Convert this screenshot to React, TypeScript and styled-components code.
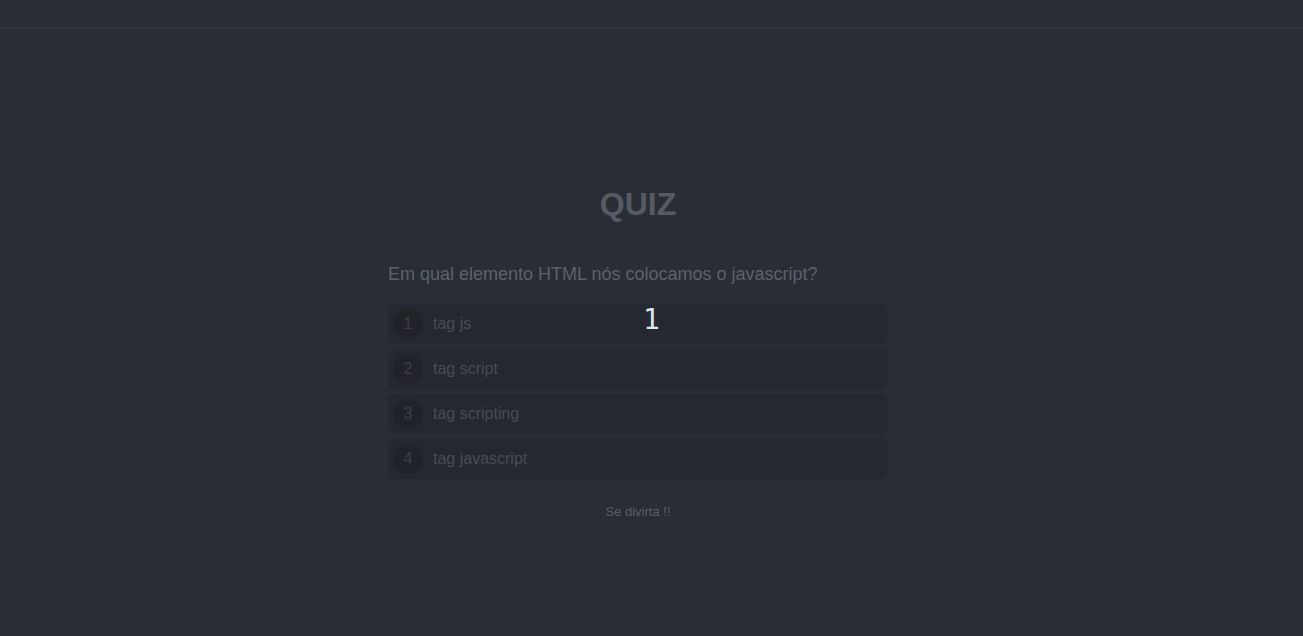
import React from 'react';
import styled, { createGlobalStyle } from 'styled-components';

const GlobalStyle = createGlobalStyle`
  html, body {
    margin: 0;
    padding: 0;
    background: #2a2d35;
    font-family: "Liberation Sans", Arial, sans-serif;
  }
`;

const Page = styled.div`
  min-height: 636px;
  background: #2a2d35;
  display: flex;
  flex-direction: column;
`;

const TopBar = styled.header`
  height: 28px;
  border-bottom: 1px solid #353840;
`;

const Main = styled.main`
  display: flex;
  flex-direction: column;
  align-items: center;
  padding-top: 155px;
  padding-right: 27px;
`;

const Title = styled.h1`
  margin: 0;
  color: #565a63;
  font-size: 32px;
  font-weight: 700;
  line-height: 40px;
`;

const Quiz = styled.section`
  width: 500px;
  margin-top: 39px;
`;

const Question = styled.p`
  margin: 0 0 19px;
  color: #5d6169;
  font-size: 18px;
  line-height: 22px;
`;

const Options = styled.ul`
  list-style: none;
  margin: 0;
  padding: 0;
  display: flex;
  flex-direction: column;
  gap: 5px;
  position: relative;
`;

const Option = styled.li`
  display: flex;
  align-items: center;
  gap: 10px;
  height: 40px;
  padding: 0 5px;
  border-radius: 7px;
  background: #252830;
  color: #484b53;
  font-size: 16px;
  cursor: pointer;
`;

const Number = styled.span`
  width: 30px;
  height: 30px;
  border-radius: 50%;
  background: #212329;
  color: #3c3f46;
  display: flex;
  align-items: center;
  justify-content: center;
  font-size: 16px;
`;

const Timer = styled.span`
  position: absolute;
  left: 255px;
  top: 0;
  color: #dce4ec;
  font-family: "DejaVu Sans Mono", monospace;
  font-size: 28px;
  line-height: 32px;
`;

const Footer = styled.p`
  margin: 25px 0 0;
  text-align: center;
  color: #5a5e66;
  font-size: 13px;
`;

const answers = ['tag js', 'tag script', 'tag scripting', 'tag javascript'];

const App: React.FC = () => {
  return (
    <Page>
      <GlobalStyle />
      <TopBar />
      <Main>
        <Title>QUIZ</Title>
        <Quiz>
          <Question>Em qual elemento HTML nós colocamos o javascript?</Question>
          <Options>
            {answers.map((a, i) => (
              <Option key={a}>
                <Number>{i + 1}</Number>
                {a}
              </Option>
            ))}
            <Timer>1</Timer>
          </Options>
          <Footer>Se divirta !!</Footer>
        </Quiz>
      </Main>
    </Page>
  );
};

export default App;
